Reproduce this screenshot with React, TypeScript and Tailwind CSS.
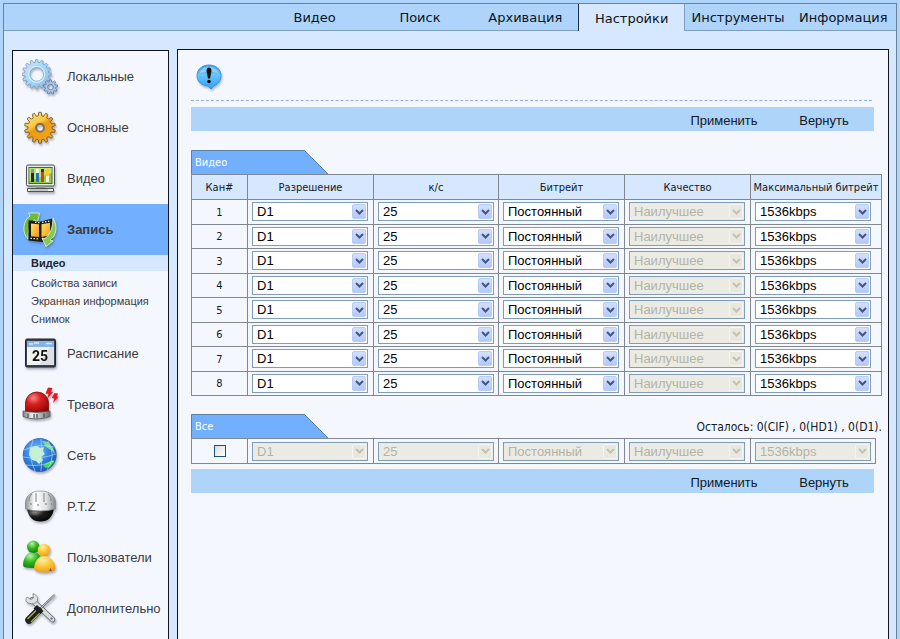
import React, { useState } from 'react';
import clsx from 'clsx';

const TABS = ['Видео', 'Поиск', 'Архивация', 'Настройки', 'Инструменты', 'Информация'];
const RECORD_PAGES = ['Видео', 'Свойства записи', 'Экранная информация', 'Снимок'];
const CHANNELS = [1, 2, 3, 4, 5, 6, 7, 8];

const FIELDS = [
    { title: 'Разрешение', options: ['D1', 'HD1', 'CIF'] },
    { title: 'к/с', options: ['25', '20', '15', '10'] },
    { title: 'Битрейт', options: ['Постоянный', 'Переменный'] },
    { title: 'Качество', options: ['Наилучшее', 'Хорошее'], locked: true },
    { title: 'Максимальный битрейт', options: ['1536kbps', '1024kbps', '768kbps'] }
];

// Outline of a cog: square-ish teeth between the inner and outer radius
function gearPath(cx: number, cy: number, outer: number, inner: number, teeth: number) {
    const step = (Math.PI * 2) / teeth;
    const points: string[] = [];
    for (let i = 0; i < teeth; i++) {
        const a = i * step - Math.PI / 2;
        [
            [inner, -0.32],
            [outer, -0.17],
            [outer, 0.17],
            [inner, 0.32]
        ].forEach(([r, t]) => {
            points.push(`${(cx + r * Math.cos(a + t * step)).toFixed(2)} ${(cy + r * Math.sin(a + t * step)).toFixed(2)}`);
        });
    }
    return `M${points.join('L')}Z`;
}

function circlePath(cx: number, cy: number, r: number) {
    return `M${cx - r} ${cy}a${r} ${r} 0 1 0 ${r * 2} 0a${r} ${r} 0 1 0 ${-r * 2} 0Z`;
}

function Icon({ children }: { children: React.ReactNode }) {
    return (
        <svg viewBox="0 0 36 36" className="h-9 w-9 shrink-0 drop-shadow-[1px_2px_1px_rgba(60,70,90,0.4)]" aria-hidden="true">
            {children}
        </svg>
    );
}

function LocalIcon() {
    return (
        <Icon>
            <defs>
                <linearGradient id="local-a" x1="0" y1="0" x2="1" y2="1">
                    <stop offset="0" stopColor="#d3e2f7" />
                    <stop offset="0.5" stopColor="#a5d8f8" />
                    <stop offset="1" stopColor="#8fb0dd" />
                </linearGradient>
            </defs>
            <path d={gearPath(14.7, 15.3, 14.7, 12, 16) + circlePath(14.7, 15.3, 7)} fill="url(#local-a)" stroke="#7f9dbf" strokeWidth="0.8" fillRule="evenodd" />
            <circle cx="14.7" cy="15.3" r="8" fill="none" stroke="#c7efff" strokeWidth="1.3" />
            <path d={gearPath(28.5, 28, 7.2, 5.2, 9) + circlePath(28.5, 28, 2.8)} fill="#a9c8e8" stroke="#6385ae" strokeWidth="0.9" fillRule="evenodd" />
        </Icon>
    );
}

function GeneralIcon() {
    return (
        <Icon>
            <defs>
                <linearGradient id="gen-a" x1="0" y1="0" x2="0.6" y2="1">
                    <stop offset="0" stopColor="#ffe98c" />
                    <stop offset="0.45" stopColor="#fbc640" />
                    <stop offset="0.55" stopColor="#ec9c11" />
                    <stop offset="1" stopColor="#f3a41c" />
                </linearGradient>
            </defs>
            <path d={gearPath(18, 17.8, 15.5, 12, 14) + circlePath(18, 17.8, 3.6)} fill="url(#gen-a)" stroke="#7a5a22" strokeWidth="0.9" fillRule="evenodd" />
            <circle cx="18" cy="17.8" r="4.2" fill="none" stroke="#77716a" strokeWidth="1.5" />
        </Icon>
    );
}

function VideoIcon() {
    return (
        <Icon>
            <rect x="4.5" y="4" width="28" height="21" rx="1.5" fill="#e7eae4" stroke="#4d5351" />
            <rect x="7" y="6.5" width="23" height="16" fill="#8bd043" stroke="#4f5f45" />
            <path d="M7.5 7h22v5l-22 8z" fill="#b8e873" />
            <path d="M9 8h3v4H9z" fill="#8b9298" />
            <path d="M9 12h3v9H9z" fill="#26282b" />
            <path d="M14 8h3v4h-3z" fill="#f3f7fb" />
            <path d="M14 12h3v9h-3z" fill="#2675c0" />
            <path d="M19 8h3v3h-3z" fill="#6b1d16" />
            <path d="M19 11h3v10h-3z" fill="#e2371f" />
            <path d="M24 8h3v7h-3z" fill="#f7cf28" />
            <path d="M24 15h3v6h-3z" fill="#f5f1dc" />
            <path d="M14 25h9v2h-9z" fill="#8f9694" />
            <path d="M5.5 27.5h26v3h-26z" fill="#eceeea" stroke="#4d5351" />
            <path d="M8 29h18" stroke="#9aa09c" />
        </Icon>
    );
}

function RecordIcon() {
    return (
        <Icon>
            <defs>
                <linearGradient id="rec-a" x1="0" y1="0" x2="1" y2="1">
                    <stop offset="0" stopColor="#ffe36a" />
                    <stop offset="1" stopColor="#f59a12" />
                </linearGradient>
            </defs>
            <path d="M6 27C-.5 21 1 8 8 4L6.5 1l11 0-2 9-3-2C8 11 6 18 6 27Z" fill="#6fb83d" stroke="#e4f6d6" strokeWidth="0.8" />
            <path d="M6.5 8.5h4l3 1h5l12-3v21l-10 2.5-14-1.5z" fill="#1b1a14" />
            <path d="M9 11.5l8 .8v12.7l-8-.8z" fill="url(#rec-a)" />
            <path d="M19.5 12.3l8.5-1.6v12.6l-8.5 1.7z" fill="url(#rec-a)" />
            <path d="M13 10.3l5 .4M20 10.5l9-1.7M8.5 26.3l8.5.7M20 27l9-1.9" stroke="#f3f1e2" strokeWidth="1.3" strokeDasharray="1.5 1.5" />
            <path d="M31 6c5 8 3.5 18-3 22l3 1-7 5.5-4-8.5 3 .5C28 23 31 15 31 6Z" fill="#86cb50" stroke="#eaf9dc" strokeWidth="0.8" />
        </Icon>
    );
}

function ScheduleIcon() {
    return (
        <Icon>
            <rect x="3.5" y="3" width="30" height="28" rx="1.5" fill="#3c4452" stroke="#20242c" />
            <rect x="5" y="5" width="27" height="6" fill="#87b4e8" />
            <path d="M7 8h4M12 7h5M24 7.5h6" stroke="#d7e8fa" strokeWidth="1.5" />
            <rect x="5" y="11" width="27" height="18" fill="#f1f2f2" />
            <path d="M28 11h4v18H17z" fill="#dcdfe3" />
            <text x="18" y="25" textAnchor="middle" className="font-['Roboto'] text-[14px] font-bold" fill="#111">
                25
            </text>
        </Icon>
    );
}

function AlarmIcon() {
    return (
        <Icon>
            <defs>
                <radialGradient id="alarm-a" cx="0.35" cy="0.3" r="0.8">
                    <stop offset="0" stopColor="#f28a84" />
                    <stop offset="0.4" stopColor="#dc1f1f" />
                    <stop offset="1" stopColor="#8c0707" />
                </radialGradient>
                <linearGradient id="alarm-b">
                    <stop offset="0" stopColor="#7e8385" />
                    <stop offset="0.35" stopColor="#eef0f0" />
                    <stop offset="0.7" stopColor="#a4a9ab" />
                    <stop offset="1" stopColor="#6c7072" />
                </linearGradient>
            </defs>
            <path d="M3.5 25V16a11.5 11 0 0 1 23 0v9Z" fill="url(#alarm-a)" stroke="#741010" strokeWidth="0.8" />
            <path d="M1 24q13.5 3 27 0v5.5q-13.5 5-27 0Z" fill="url(#alarm-b)" stroke="#55595b" strokeWidth="0.8" />
            <path d="M6 26.5v4M12 27v4.5M15 27v4.5M22 26.5v4" stroke="#4a4e50" strokeWidth="1.2" />
            <path d="M26 .5l4.5 .5-1.5 3.5 2 .5-6 7 1.5-5-3-.5zM32.5 6l3.5 .5-1 3 1.5.5-5.5 6 1.2-4.5-2.5-.5z" fill="#e21b22" />
        </Icon>
    );
}

function NetworkIcon() {
    return (
        <Icon>
            <defs>
                <radialGradient id="net-a" cx="0.4" cy="0.35" r="0.7">
                    <stop offset="0" stopColor="#72b8fa" />
                    <stop offset="0.6" stopColor="#2d7ddb" />
                    <stop offset="1" stopColor="#1b55ad" />
                </radialGradient>
            </defs>
            <circle cx="17.7" cy="17" r="16.5" fill="url(#net-a)" stroke="#2960ad" strokeWidth="0.8" />
            <path d="M8 9l7-1 3 2 4-1-1 4 2 3-4 3 2 3-4 4-3-3-4-1-3-5z" fill="#c5f2d3" />
            <path d="M20 3l6 1 5 6 2 6-4-4-5-3z" fill="#7fdb9a" />
            <path d="M24 25l7-3 1 2-4 5-4 1-3-2z" fill="#3fdd52" />
            <path d="M2 12q15-7 30-3M1 19q16 3 33-3M4 27q15 2 28-4M11 2Q5 16 13 33M19 1Q21 18 19 33M26 3Q35 18 25 32" fill="none" stroke="#bfdefa" strokeWidth="0.8" opacity="0.8" />
        </Icon>
    );
}

function PtzIcon() {
    return (
        <Icon>
            <defs>
                <linearGradient id="ptz-a">
                    <stop offset="0" stopColor="#8f9496" />
                    <stop offset="0.3" stopColor="#ffffff" />
                    <stop offset="0.7" stopColor="#dfe1e3" />
                    <stop offset="1" stopColor="#85898c" />
                </linearGradient>
                <radialGradient id="ptz-b" cx="0.3" cy="0.3" r="0.8">
                    <stop offset="0" stopColor="#8d8d8d" />
                    <stop offset="0.4" stopColor="#1d1d1d" />
                    <stop offset="1" stopColor="#000000" />
                </radialGradient>
            </defs>
            <path d="M5 19.5h27q-2 13-13.5 13T5 19.5Z" fill="url(#ptz-b)" />
            <path d="M3.5 20V13C4 6 10 2 18.5 2S33 6 33.5 13v7q-15 4-30 0Z" fill="url(#ptz-a)" stroke="#83888b" strokeWidth="0.7" />
            <path d="M7 12q0-5 3-7M14 13V4M22 13V4M29 12q0-5-3-7" fill="none" stroke="#8d9295" strokeWidth="1.2" />
            <path d="M8 15h2M15 16h2M23 15h2M29 15h1" stroke="#777b7e" />
        </Icon>
    );
}

function UsersIcon() {
    return (
        <Icon>
            <defs>
                <radialGradient id="usr-a" cx="0.4" cy="0.25" r="0.8">
                    <stop offset="0" stopColor="#b9f5a2" />
                    <stop offset="0.5" stopColor="#2fb51f" />
                    <stop offset="1" stopColor="#088008" />
                </radialGradient>
                <radialGradient id="usr-b" cx="0.4" cy="0.25" r="0.8">
                    <stop offset="0" stopColor="#fff0a8" />
                    <stop offset="0.5" stopColor="#fcc63c" />
                    <stop offset="1" stopColor="#ee9a10" />
                </radialGradient>
            </defs>
            <path d="M1 24C2 16 6 12 11 12s8 3 8 8v7q-9 2-17 0Q1 26 1 24Z" fill="url(#usr-a)" />
            <circle cx="11.3" cy="6.8" r="6.2" fill="url(#usr-a)" />
            <path d="M12 28c1-8 5-12 10.5-12S33 21 33.5 28q0 4-11 4.5Q12 32 12 28Z" fill="url(#usr-b)" />
            <circle cx="22" cy="10" r="6.3" fill="url(#usr-b)" />
            <path d="M27 31l1.5-3 1.5 3z" fill="#7d5a12" />
        </Icon>
    );
}

function ExtraIcon() {
    return (
        <Icon>
            <path d="M10 9L30.5 28.5" stroke="#6d7276" strokeWidth="5.5" strokeLinecap="round" />
            <path d="M10 9L30.5 28.5" stroke="#d9dcde" strokeWidth="3.8" strokeLinecap="round" />
            <path d="M5 6l4 2.5 2.5-1.5L11 2.500q5.500 2 4.500 7-3 5-9 2.500Q2 10 5 6Z" fill="#dfe2e4" stroke="#7d8286" strokeWidth="0.8" />
            <circle cx="29.5" cy="27.5" r="1.2" fill="#7b8084" />
            <path d="M32.5 4L17 19" stroke="#5b6063" strokeWidth="2.2" />
            <path d="M32.5 4L17 19" stroke="#d5d9db" strokeWidth="1" />
            <path d="M28 7l5-4 .5 1.5-4 4z" fill="#a9aeb1" />
            <path d="M16 20L7 29" stroke="#20221f" strokeWidth="7.5" strokeLinecap="round" />
            <path d="M14 19.5L5.5 28M18 22L9 31" stroke="#a8b04d" strokeWidth="1.4" />
            <path d="M15 14l6.5 6-3 3-7-5.500z" fill="#1d1e1e" />
        </Icon>
    );
}

function AlertBubble() {
    return (
        <svg viewBox="0 0 28 28" className="h-7 w-7 drop-shadow-[1px_2px_1px_rgba(60,80,110,0.4)]" role="img" aria-label="!">
            <defs>
                <linearGradient id="bubble-a" x1="0" y1="0" x2="0" y2="1">
                    <stop offset="0" stopColor="#2f9cf0" />
                    <stop offset="0.4" stopColor="#6cc4fb" />
                    <stop offset="1" stopColor="#29a4f6" />
                </linearGradient>
            </defs>
            <path d="M14 2c7 0 12 4.5 12 10.5S21.5 22 18.5 23L16 26l-3-3C6.5 22.5 2 18.5 2 12.5S7 2 14 2Z" fill="url(#bubble-a)" stroke="#2a86d4" strokeWidth="0.8" />
            <path d="M5 10C6 5.5 10 3.5 14 3.5s8 2 9 6.5q-9-3-18 0Z" fill="#ffffff" opacity="0.35" />
            <path d="M11.500 8q0-3.500 2.500-3.500t2.500 3.500l-1.500 7.500h-2z" fill="#0b1013" />
            <circle cx="14" cy="18.5" r="1.8" fill="#0b1013" />
        </svg>
    );
}

const MENU = [
    { label: 'Локальные', icon: <LocalIcon /> },
    { label: 'Основные', icon: <GeneralIcon /> },
    { label: 'Видео', icon: <VideoIcon /> },
    { label: 'Запись', icon: <RecordIcon />, pages: RECORD_PAGES },
    { label: 'Расписание', icon: <ScheduleIcon /> },
    { label: 'Тревога', icon: <AlarmIcon /> },
    { label: 'Сеть', icon: <NetworkIcon /> },
    { label: 'P.T.Z', icon: <PtzIcon /> },
    { label: 'Пользователи', icon: <UsersIcon /> },
    { label: 'Дополнительно', icon: <ExtraIcon /> }
];

function Header() {
    return (
        <header className="flex h-[27px] justify-end border-b border-[#7d9fc0] bg-[#aed4fb]">
            <nav className="flex w-[634px] font-['DejaVu_Sans',sans-serif] text-[13px]">
                {TABS.map((tab) => (
                    <a
                        key={tab}
                        href="#"
                        className={clsx(
                            'flex flex-1 basis-0 items-center justify-center pt-[2px] text-[#0a1420]',
                            tab === 'Настройки' && '-mb-px border-r border-l border-l-[#1c3044] border-r-[#7d9fc0] bg-[#d5e8ff]'
                        )}
                    >
                        {tab}
                    </a>
                ))}
            </nav>
        </header>
    );
}

function Sidebar() {
    return (
        <aside className="w-[157px] shrink-0 border border-b-0 border-[#10151c] bg-[#f5f7ff] font-['Liberation_Sans',sans-serif] text-[#3c3c3c]">
            {MENU.map((item) => (
                <div key={item.label}>
                    <a
                        href="#"
                        className={clsx(
                            'flex h-[51px] items-center gap-[9px] pl-[9px] text-[13px]',
                            item.pages && 'bg-[#72afff] font-bold'
                        )}
                    >
                        {item.icon}
                        {item.label}
                    </a>
                    {item.pages && (
                        <ul className="text-[11px]">
                            {item.pages.map((page, i) => (
                                <li key={page}>
                                    <a
                                        href="#"
                                        className={clsx(
                                            'block pl-[18px]',
                                            i === 0 ? 'mb-[3px] bg-[#d5e8ff] leading-4 font-bold text-[#222]' : 'leading-[18px]'
                                        )}
                                    >
                                        {page}
                                    </a>
                                </li>
                            ))}
                        </ul>
                    )}
                </div>
            ))}
        </aside>
    );
}

function Toolbar() {
    return (
        <div className="mr-2 flex h-6 justify-end bg-[#afd4fa] font-['Liberation_Sans',sans-serif] text-[13px] text-[#10181f]">
            <button type="button" className="w-[100px] pt-[3px]">Применить</button>
            <button type="button" className="w-[100px] pt-[3px]">Вернуть</button>
        </div>
    );
}

function SectionTab({ title }: { title: string }) {
    return (
        <h2 className="relative flex h-6 w-[138px] items-center pt-[2px] pl-1 text-[11px] text-white">
            <svg viewBox="0 0 138 24" className="absolute inset-0 h-full w-full" aria-hidden="true">
                <path d="M.5 24.5V.5H113.5L137.5 24.5" fill="#72afff" stroke="#5d7f9f" />
            </svg>
            <span className="relative">{title}</span>
        </h2>
    );
}

interface SelectBoxProps {
    label: string;
    options: string[];
    disabled?: boolean;
}

function SelectBox({ label, options, disabled }: SelectBoxProps) {
    return (
        <div className="relative h-[19px] w-[116px]">
            <select
                aria-label={label}
                disabled={disabled}
                className="block h-full w-full appearance-none border border-[#7f9db9] bg-white pr-5 pl-1 font-['Liberation_Sans',sans-serif] text-[13px] leading-[17px] text-black disabled:bg-[#ebebe4] disabled:text-[#b4b3a4] disabled:opacity-100"
            >
                {options.map((option) => (
                    <option key={option}>{option}</option>
                ))}
            </select>
            <span
                className={clsx(
                    'pointer-events-none absolute top-[2px] right-[2px] bottom-[2px] flex w-[14px] items-center justify-center rounded-[2px] border',
                    disabled
                        ? 'border-[#f5f4ee] bg-[#e9e8df] text-[#c3c2b4]'
                        : 'border-[#b8cbf5] bg-linear-to-b from-[#d3e0fe] to-[#b4c9fa] text-[#42587f]'
                )}
            >
                <svg viewBox="0 0 9 6" className="h-[6px] w-[9px]" aria-hidden="true">
                    <path d="M1 1l3.5 3.5L8 1" fill="none" stroke="currentColor" strokeWidth="2" />
                </svg>
            </span>
        </div>
    );
}

function Columns() {
    return (
        <colgroup>
            <col className="w-[56px]" />
            <col className="w-[126px]" />
            <col className="w-[125px]" />
            <col className="w-[126px]" />
            <col className="w-[126px]" />
            <col />
        </colgroup>
    );
}

export default function App() {
    const [applyAll, setApplyAll] = useState(false);

    return (
        <div className="flex min-h-screen flex-col bg-[#aed4fb] px-[3px] pt-[3px] font-['DejaVu_Sans_Condensed','DejaVu_Sans',sans-serif] text-[11px]">
            <div className="flex flex-1 flex-col border border-b-0 border-[#6d8296] bg-[#d5e8ff]">
                <Header />

                <div className="flex flex-1 gap-2 pt-[18px] pr-[7px] pl-2">
                    <div className="flex pt-px">
                        <Sidebar />
                    </div>

                    <main className="min-w-0 flex-1 border border-b-0 border-[#10151c] bg-[#f5f7ff] pt-[13px] pr-[6px] pl-[13px]">
                        <div className="mr-[10px] mb-[6px] h-[38px] border-b border-dashed border-[#8fb2e4] pl-1">
                            <AlertBubble />
                        </div>
                        <Toolbar />

                        <section className="mt-[19px]">
                            <SectionTab title="Видео" />
                            <table className="h-[222px] w-full table-fixed border-collapse text-center text-[#14181c]">
                                <Columns />
                                <thead>
                                    <tr className="h-[25px] bg-[#d5e8ff]">
                                        <th className="border border-[#808890] pt-[2px] font-normal">Кан#</th>
                                        {FIELDS.map((field) => (
                                            <th key={field.title} className="border border-[#808890] pt-[2px] font-normal whitespace-nowrap">
                                                {field.title}
                                            </th>
                                        ))}
                                    </tr>
                                </thead>
                                <tbody>
                                    {CHANNELS.map((channel) => (
                                        <tr key={channel}>
                                            <td className="border border-[#808890] pt-[2px]">{channel}</td>
                                            {FIELDS.map((field) => (
                                                <td key={field.title} className="border border-[#808890] pl-1 text-left">
                                                    <SelectBox
                                                        label={`${field.title} ${channel}`}
                                                        options={field.options}
                                                        disabled={field.locked}
                                                    />
                                                </td>
                                            ))}
                                        </tr>
                                    ))}
                                </tbody>
                            </table>
                        </section>

                        <section className="mt-[18px] mb-[5px]">
                            <div className="flex items-center justify-between">
                                <SectionTab title="Все" />
                                <p className="pt-[2px] text-[12px] text-[#14181c]">Осталось: 0(CIF) , 0(HD1) , 0(D1).</p>
                            </div>
                            <div className="pr-[6px]">
                                <table className="h-[26px] w-full table-fixed border-collapse">
                                    <Columns />
                                    <tbody>
                                        <tr>
                                            <td className="border border-[#808890]">
                                                <input
                                                    type="checkbox"
                                                    aria-label="Все"
                                                    checked={applyAll}
                                                    onChange={(e) => setApplyAll(e.target.checked)}
                                                    className="mx-auto block h-3 w-3 appearance-none border border-[#1c5180] bg-linear-to-br from-[#dcdcd7] to-white checked:bg-[#72afff]"
                                                />
                                            </td>
                                            {FIELDS.map((field) => (
                                                <td key={field.title} className="border border-[#808890] pl-1">
                                                    <SelectBox
                                                        label={`${field.title}, все`}
                                                        options={field.options}
                                                        disabled={!applyAll || field.locked}
                                                    />
                                                </td>
                                            ))}
                                        </tr>
                                    </tbody>
                                </table>
                            </div>
                        </section>
                        <Toolbar />
                    </main>
                </div>
            </div>
        </div>
    );
}
